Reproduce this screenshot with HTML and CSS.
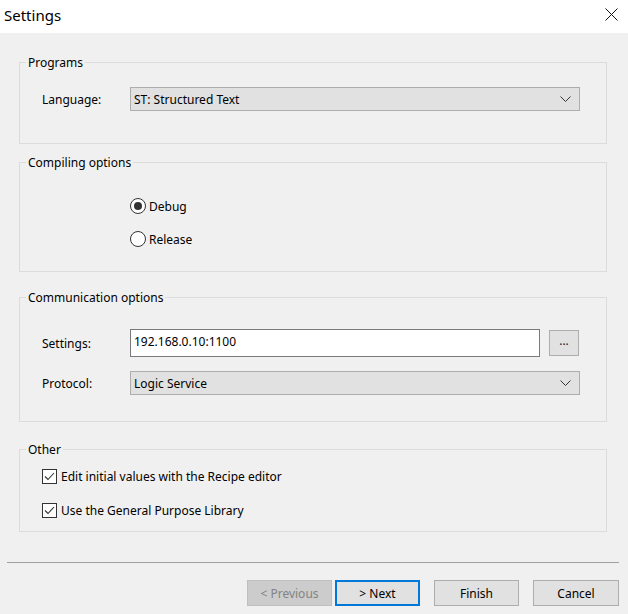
FILE: index.html
```html
<!DOCTYPE html>
<html>
<head>
<meta charset="utf-8">
<title>Settings</title>
<link rel="stylesheet" href="styles.css">
</head>
<body>
<div class="window">
  <div class="titlebar">
    <span class="title">Settings</span>
    <svg class="close" width="13" height="13" viewBox="0 0 13 13"><path d="M0.5 0.5 L12.5 12.5 M12.5 0.5 L0.5 12.5" stroke="#111" stroke-width="1" fill="none"/></svg>
  </div>
  <div class="content">
    <fieldset class="group g-programs">
      <legend>Programs</legend>
      <div class="inner">
        <div class="row">
          <span class="label">Language:</span>
          <div class="combo combo-wide"><span>ST: Structured Text</span>
            <svg class="chev" width="11" height="6" viewBox="0 0 11 6"><path d="M0.5 0.5 L5.5 5.5 L10.5 0.5" stroke="#333" stroke-width="1" fill="none"/></svg>
          </div>
        </div>
      </div>
    </fieldset>

    <fieldset class="group g-compile">
      <legend>Compiling options</legend>
      <div class="inner">
        <div class="opt"><span class="radio checked"></span><span>Debug</span></div>
        <div class="opt opt2"><span class="radio"></span><span>Release</span></div>
      </div>
    </fieldset>

    <fieldset class="group g-comm">
      <legend>Communication options</legend>
      <div class="inner">
        <div class="row row-settings">
          <span class="label">Settings:</span>
          <div class="textbox">192.168.0.10:1100</div>
          <div class="dots">...</div>
        </div>
        <div class="row row-protocol">
          <span class="label">Protocol:</span>
          <div class="combo combo-wide"><span>Logic Service</span>
            <svg class="chev" width="11" height="6" viewBox="0 0 11 6"><path d="M0.5 0.5 L5.5 5.5 L10.5 0.5" stroke="#333" stroke-width="1" fill="none"/></svg>
          </div>
        </div>
      </div>
    </fieldset>

    <fieldset class="group g-other">
      <legend>Other</legend>
      <div class="inner">
        <div class="check-row"><span class="checkbox"><svg width="13" height="13" viewBox="0 0 13 13"><path d="M2 6.5 L5 9.5 L11 3" stroke="#333" stroke-width="1.1" fill="none"/></svg></span><span>Edit initial values with the Recipe editor</span></div>
        <div class="check-row cr2"><span class="checkbox"><svg width="13" height="13" viewBox="0 0 13 13"><path d="M2 6.5 L5 9.5 L11 3" stroke="#333" stroke-width="1.1" fill="none"/></svg></span><span>Use the General Purpose Library</span></div>
      </div>
    </fieldset>
  </div>
  <div class="separator"></div>
  <div class="buttons">
    <div class="btn disabled">&lt; Previous</div>
    <div class="btn default">&gt; Next</div>
    <div class="btn finish">Finish</div>
    <div class="btn cancel">Cancel</div>
  </div>
</div>
</body>
</html>
```

FILE: styles.css
```css
* { box-sizing: border-box; }
html, body {
  margin: 0;
  padding: 0;
  background: #f0f0f0;
}
body {
  font-family: "Noto Sans", "Open Sans", sans-serif;
  font-size: 12px;
  color: #000;
}
.window {
  width: 628px;
  height: 614px;
  background: #f0f0f0;
  overflow: hidden;
}
.titlebar {
  height: 33px;
  background: #fff;
  display: flex;
  align-items: center;
  justify-content: space-between;
  padding: 0 10px 0 4px;
}
.title {
  font-size: 15px;
  line-height: 20px;
  margin-top: -3px;
}
.close {
  display: block;
  margin-top: -5px;
}
.content {
  padding: 0 21px 0 19px;
  display: flex;
  flex-direction: column;
}
.group {
  margin: 0;
  border: 1px solid #dcdcdc;
  padding: 0;
  min-width: 0;
}
.group legend {
  margin-left: 6px;
  padding: 0 2px;
  line-height: 15px;
  font-size: 12px;
}
.inner {
  padding-left: 22px;
}
.g-programs { margin-top: 22px; padding-top: 17px; padding-bottom: 32px; }
.g-compile { margin-top: 11px; padding-top: 26px; padding-bottom: 22px; }
.g-comm { margin-top: 18px; padding-top: 24px; padding-bottom: 26px; }
.g-other { margin-top: 20px; padding-top: 9px; padding-bottom: 11px; }

.row {
  display: flex;
  align-items: center;
}
.label {
  width: 88px;
  flex: none;
}
.combo {
  height: 24px;
  background: #e1e1e1;
  border: 1px solid #adadad;
  display: flex;
  align-items: center;
  justify-content: space-between;
  padding: 0 8px 0 3px;
}
.combo-wide { width: 450px; }
.chev { display: block; }
.row-settings { height: 28px; }
.textbox {
  width: 410px;
  height: 28px;
  background: #fff;
  border: 1px solid #7a7a7a;
  padding: 0 3px;
  line-height: 24px;
}
.dots {
  margin-left: 9px;
  width: 30px;
  height: 26px;
  background: #e1e1e1;
  border: 1px solid #adadad;
  text-align: center;
  line-height: 20px;
  color: #222;
}
.row-protocol { margin-top: 14px; }

.opt {
  display: flex;
  align-items: center;
  height: 20px;
  padding-left: 88px;
  gap: 3px;
}
.opt2 { margin-top: 13px; }
.radio {
  width: 16px;
  height: 16px;
  border: 1px solid #333;
  border-radius: 50%;
  background: #fff;
  display: flex;
  align-items: center;
  justify-content: center;
  flex: none;
}
.radio.checked::after {
  content: "";
  width: 8px;
  height: 8px;
  border-radius: 50%;
  background: #333;
}
.check-row {
  display: flex;
  align-items: center;
  height: 20px;
  gap: 4px;
}
.cr2 { margin-top: 14px; }
.checkbox {
  width: 15px;
  height: 15px;
  border: 1px solid #333;
  background: #fff;
  flex: none;
  display: flex;
  align-items: center;
  justify-content: center;
}
.checkbox svg { display: block; }

.separator {
  margin: 30px 9px 0 7px;
  height: 1px;
  background: #a0a0a0;
}
.buttons {
  margin-top: 17px;
  display: flex;
  padding-left: 247px;
}
.btn {
  width: 85px;
  height: 26px;
  background: #e1e1e1;
  border: 1px solid #adadad;
  display: flex;
  align-items: center;
  justify-content: center;
}
.btn.disabled {
  background: #cccccc;
  border-color: #bfbfbf;
  color: #838383;
}
.btn.default {
  margin-left: 3px;
  border: 2px solid #0078d7;
}
.btn.finish { margin-left: 14px; }
.btn.cancel { margin-left: 14px; width: 86px; }
```
